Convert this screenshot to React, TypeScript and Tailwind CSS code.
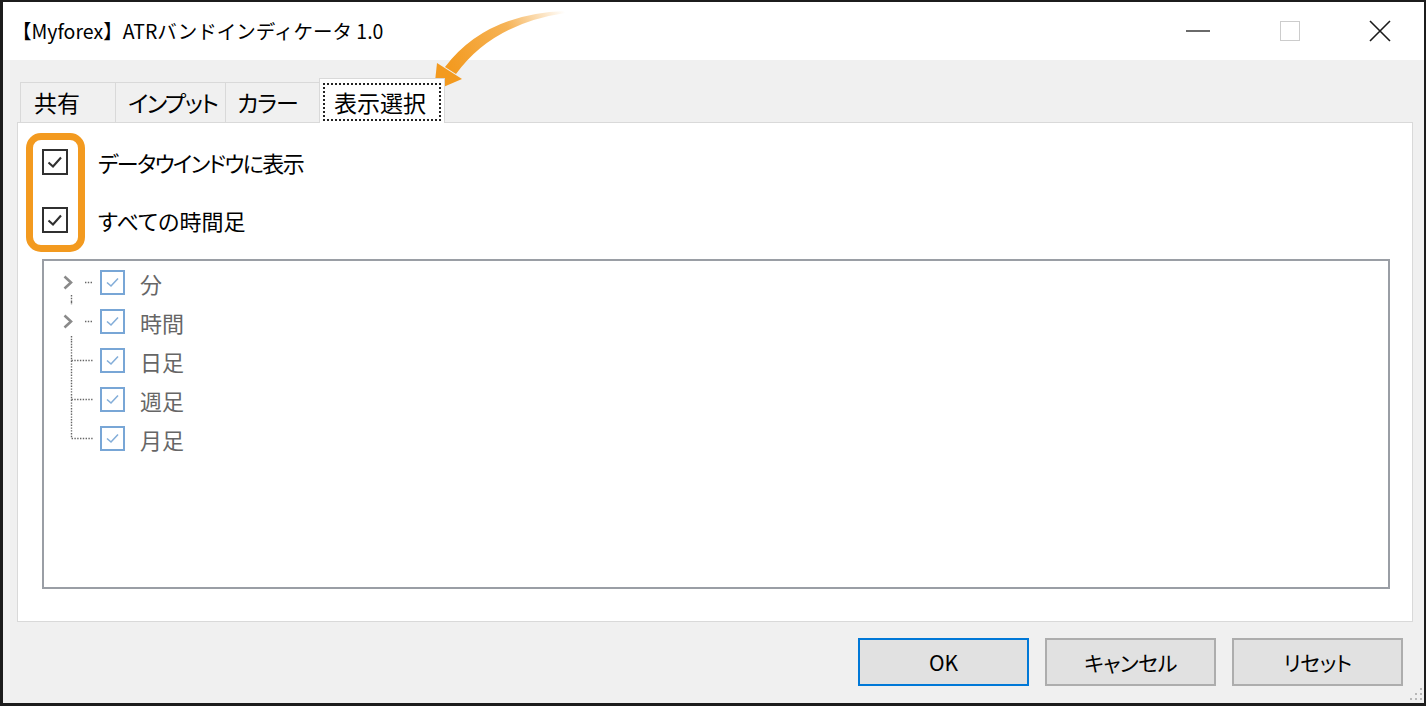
import React from "react";

function MainCheck() {
  return (
    <div className="flex h-[26px] w-[26px] shrink-0 items-center justify-center border-2 border-[#303030] bg-white">
      <svg width="22" height="22" viewBox="0 0 22 22">
        <path d="M4.5 11.5 L9 15.5 L17 6.5" fill="none" stroke="#303030" strokeWidth="2.1" />
      </svg>
    </div>
  );
}

function TreeCheck() {
  return (
    <div className="flex h-[25px] w-[25px] shrink-0 items-center justify-center border-2 border-[#78a6d6] bg-white">
      <svg width="21" height="21" viewBox="0 0 21 21">
        <path d="M5 10.5 L9 14 L16 6.5" fill="none" stroke="#84aed9" strokeWidth="1.6" />
      </svg>
    </div>
  );
}

type Kind = "first" | "second" | "mid" | "last";

function Connector({ kind }: { kind: Kind }) {
  const dot = { stroke: "#666666", strokeWidth: 1.4, strokeDasharray: "1.4 1.4", fill: "none" } as const;
  return (
    <svg width="56" height="39" viewBox="0 0 56 39" className="shrink-0">
      {(kind === "first" || kind === "second") && (
        <>
          <path d="M20.5 13.5 L27 19.5 L20.5 25.5" fill="none" stroke="#8a8a8a" strokeWidth="2.6" />
          <path d="M41 19.5 L48 19.5" {...dot} />
        </>
      )}
      {kind === "first" && <path d="M27.5 32 L27.5 39" {...dot} />}
      {kind === "second" && <path d="M27.5 0 L27.5 3 M27.5 34 L27.5 39" {...dot} />}
      {kind === "mid" && <path d="M27.5 0 L27.5 39 M27.5 19.5 L49 19.5" {...dot} />}
      {kind === "last" && <path d="M27.5 0 L27.5 19.5 L49 19.5" {...dot} />}
    </svg>
  );
}

const treeRows: { label: string; kind: Kind }[] = [
  { label: "分", kind: "first" },
  { label: "時間", kind: "second" },
  { label: "日足", kind: "mid" },
  { label: "週足", kind: "mid" },
  { label: "月足", kind: "last" },
];

export default function App() {
  return (
    <div className="relative h-[706px] w-[1426px] overflow-hidden bg-[#1c1c1c] pb-[3px] pl-[3px] pr-[2px] pt-[2px] font-['Noto_Sans_CJK_JP','Noto_Sans',sans-serif] text-black">
      <div className="relative flex h-full flex-col bg-[#f0f0f0]">
        {/* Title bar */}
        <div className="flex h-[58px] shrink-0 items-center bg-white">
          <span className="whitespace-nowrap pl-[9px] text-[19.5px] leading-none text-black">【Myforex】ATRバンドインディケータ 1.0</span>
          <div className="ml-auto flex h-full">
            <div className="flex h-full w-[92px] items-center justify-center">
              <svg width="24" height="2" viewBox="0 0 24 2">
                <path d="M0 1 L24 1" stroke="#1a1a1a" strokeWidth="1.3" />
              </svg>
            </div>
            <div className="flex h-full w-[92px] items-center justify-center">
              <div className="h-[20px] w-[20px] border-[1.5px] border-[#cccccc]" />
            </div>
            <div className="flex h-full w-[88px] items-center justify-center">
              <svg width="22" height="22" viewBox="0 0 22 22">
                <path d="M1 1 L21 21 M21 1 L1 21" stroke="#1a1a1a" strokeWidth="1.6" />
              </svg>
            </div>
          </div>
        </div>

        {/* Body */}
        <div className="flex flex-col pl-[14px] pr-[11px] pt-[18px]">
          {/* Tabs */}
          <div className="flex h-[44px] items-end whitespace-nowrap pl-[3px] text-[23px] leading-none [font-feature-settings:'palt']">
            <div className="flex h-[40px] w-[95px] items-center border-l border-t border-[#d9d9d9] pl-[13px]">共有</div>
            <div className="flex h-[40px] w-[110px] items-center border-l border-t border-[#d9d9d9] pl-[12px] tracking-[-1.5px]">インプット</div>
            <div className="flex h-[40px] w-[95px] items-center border-l border-r border-t border-[#d9d9d9] pl-[11px] tracking-[-1px]">カラー</div>
            <div className="relative z-10 -mb-px ml-[-1px] h-[45px] w-[126px] border-l border-r border-t border-[#d9d9d9] bg-white pb-[1px] pl-[3px] pr-[3px] pt-[4px]">
              <div className="flex h-[38px] items-center border-2 border-dotted border-[#222] pl-[9px]">表示選択</div>
            </div>
          </div>

          {/* Panel */}
          <div className="h-[500px] border border-[#d9d9d9] bg-white pl-[24px] pt-[10px]">
            <div className="flex h-[58px] items-center gap-[30px]">
              <MainCheck />
              <span className="whitespace-nowrap text-[22px] leading-none tracking-[-1.6px] [font-feature-settings:'palt']">データウインドウに表示</span>
            </div>
            <div className="flex h-[58px] items-center gap-[30px]">
              <MainCheck />
              <span className="whitespace-nowrap text-[22px] leading-none [font-feature-settings:'palt']">すべての時間足</span>
            </div>
            <div className="mt-[10px] h-[330px] w-[1348px] border-2 border-[#9a9ea5] bg-white pt-[2px]">
              {treeRows.map((r) => (
                <div key={r.label} className="flex h-[39px] items-center">
                  <Connector kind={r.kind} />
                  <TreeCheck />
                  <span className="ml-[15px] text-[22px] leading-none text-[#666666]">{r.label}</span>
                </div>
              ))}
            </div>
          </div>

          {/* Buttons */}
          <div className="flex justify-end gap-[16px] whitespace-nowrap pr-[10px] pt-[16px] text-[21px] leading-none [font-feature-settings:'palt']">
            <button className="flex h-[48px] w-[171px] items-center justify-center border-2 border-[#0078d7] bg-[#e1e1e1]">OK</button>
            <button className="flex h-[48px] w-[171px] items-center justify-center border-2 border-[#adadad] bg-[#e1e1e1] tracking-[-0.5px]">キャンセル</button>
            <button className="flex h-[48px] w-[171px] items-center justify-center border-2 border-[#adadad] bg-[#e1e1e1] tracking-[-0.5px]">リセット</button>
          </div>
        </div>

        {/* Resize grip */}
        <svg width="14" height="16" viewBox="0 0 14 16" className="absolute bottom-0 right-0">
          <rect x="10" y="1" width="2" height="2" fill="#b8b8b8" />
          <rect x="5" y="6" width="2" height="2" fill="#b8b8b8" />
          <rect x="10" y="6" width="2" height="2" fill="#b8b8b8" />
          <rect x="0" y="11" width="2" height="2" fill="#b8b8b8" />
          <rect x="5" y="11" width="2" height="2" fill="#b8b8b8" />
          <rect x="10" y="11" width="2" height="2" fill="#b8b8b8" />
        </svg>
      </div>

      {/* Orange highlight annotation */}
      <div className="pointer-events-none absolute left-[26px] top-[133px] h-[119px] w-[59px] rounded-[15px] border-[7px] border-[#f39a1f]" />

      {/* Orange arrow annotation */}
      <svg width="1426" height="706" viewBox="0 0 1426 706" className="pointer-events-none absolute left-0 top-0">
        <defs>
          <linearGradient id="arrowGrad" gradientUnits="userSpaceOnUse" x1="565" y1="12" x2="450" y2="70">
            <stop offset="0" stopColor="#f39a1f" stopOpacity="0" />
            <stop offset="0.45" stopColor="#f39a1f" stopOpacity="0.75" />
            <stop offset="1" stopColor="#f39a1f" stopOpacity="1" />
          </linearGradient>
        </defs>
        <path d="M565 11 Q 485 14 445 67 L 456 74 Q 492 24 565 13 Z" fill="url(#arrowGrad)" />
        <path d="M434 91 L 437 63 L 462 79 Z" fill="#f39a1f" />
      </svg>
    </div>
  );
}
